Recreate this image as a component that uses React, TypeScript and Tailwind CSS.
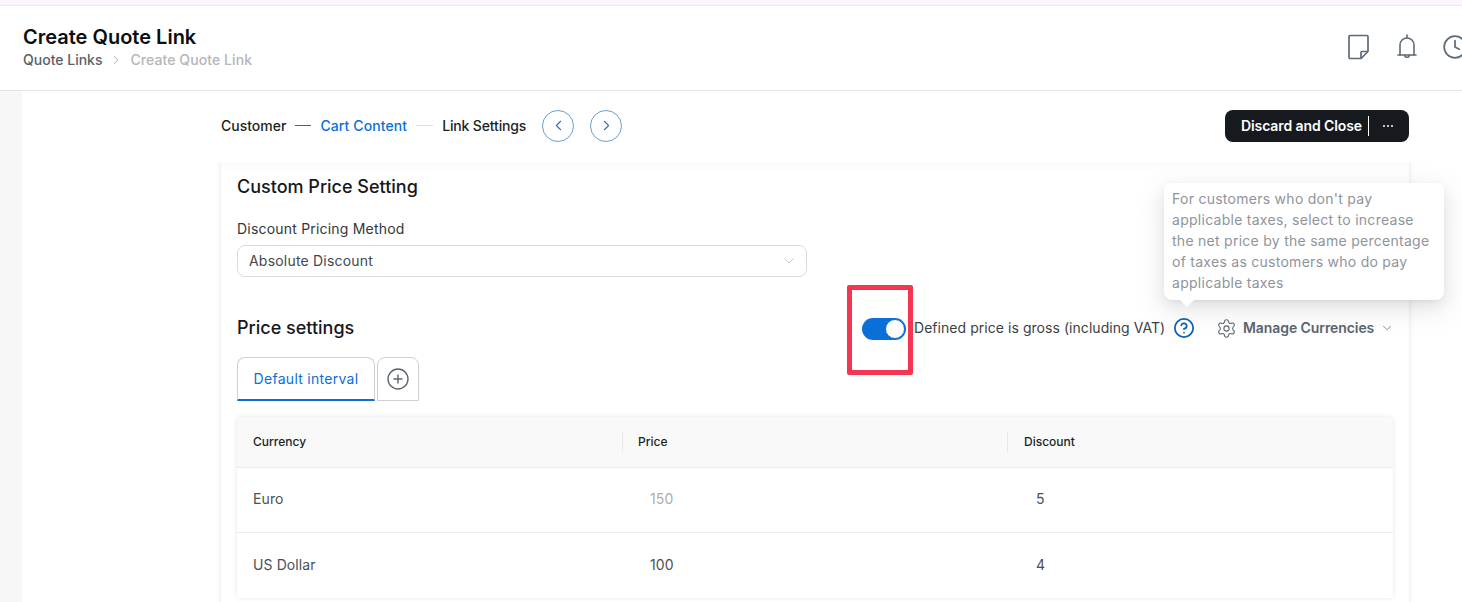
import React from "react";
import { ChevronDown, ChevronLeft, ChevronRight, Settings, Clock, CirclePlus, CircleHelp } from "lucide-react";

const rows = [
  { c: "Euro", p: "150", pc: "text-[#a9adb3]", d: "5" },
  { c: "US Dollar", p: "100", pc: "text-[#4b4f55]", d: "4" },
];

export default function App() {
  return (
    <div className="relative h-[602px] w-[1462px] overflow-hidden bg-white font-['Inter',sans-serif] text-[14px] text-[#1b1f24]">
      <div className="h-[6px] border-b border-[#eee3ee] bg-[#fdf5fd]" />
      <header className="flex h-[85px] items-center justify-between border-b border-[#e5e5e7] pl-[23px]">
        <div className="-mt-[3px] flex flex-col">
          <h1 className="text-[20px] font-semibold leading-[28px] text-[#0c0e10]">Create Quote Link</h1>
          <div className="-mt-[1px] flex items-center text-[14px] font-medium leading-[20px]">
            <span className="text-[#5b6067]">Quote Links</span>
            <ChevronRight className="mx-[7px] h-[16px] w-[14px] text-[#8d9197]" strokeWidth={1.25} />
            <span className="tracking-[0.08px] text-[#b4b6b9]">Create Quote Link</span>
          </div>
        </div>
        <div className="-mr-[6px] -mt-[2px] flex items-center text-[#5f6b78]">
          <svg width="23" height="26" viewBox="0 0 23 26" fill="none" stroke="currentColor" strokeWidth="1.7" strokeLinejoin="round">
            <path d="M3 1.5h17a1 1 0 0 1 1 1v15l-7 7H3a1 1 0 0 1-1-1v-21a1 1 0 0 1 1-1z" />
            <path d="M21 17.5h-6a1 1 0 0 0-1 1v6" />
          </svg>
          <svg className="ml-[25px]" width="24" height="26" viewBox="0 0 24 26" fill="none" stroke="currentColor" strokeWidth="1.6" strokeLinecap="round">
            <path d="M12 1v2.5" />
            <path d="M5 21V11a7 7 0 0 1 14 0v10" />
            <path d="M3 21h18" />
            <path d="M9.7 21a2.3 2.3 0 0 0 4.6 0" />
          </svg>
          <Clock className="ml-[23px] h-[26px] w-[26px]" strokeWidth={1.6} />
        </div>
      </header>
      <div className="flex h-[511px]">
        <div className="w-[22px] shrink-0 bg-[#f7f7f7]" />
        <main className="min-w-0 flex-1 pl-[199px] pr-[53px]">
          <div className="flex h-[69px] items-center justify-between">
            <div className="flex items-center text-[14px] font-medium">
              <span>Customer</span>
              <span className="mx-[9px] h-[1px] w-[16px] bg-[#0a6fe0]" />
              <span className="tracking-[0.1px] text-[#0b6fd8]">Cart Content</span>
              <span className="mx-[9px] h-[1px] w-[17px] bg-[#dedfe1]" />
              <span className="tracking-[-0.15px]">Link Settings</span>
              <button className="ml-[16px] flex h-[32px] w-[32px] items-center justify-center rounded-full border border-[#6d9fd6] text-[#3a6ea5]">
                <ChevronLeft className="h-[17px] w-[17px]" strokeWidth={1.5} />
              </button>
              <button className="ml-[16px] flex h-[32px] w-[32px] items-center justify-center rounded-full border border-[#6d9fd6] text-[#3a6ea5]">
                <ChevronRight className="h-[17px] w-[17px]" strokeWidth={1.5} />
              </button>
            </div>
            <div className="flex h-[32px] w-[184px] items-center rounded-[8px] bg-[#16191d] pl-[16px] text-[14px] font-semibold text-white">
              <span className="whitespace-nowrap tracking-[-0.1px]">Discard and Close</span>
              <span className="ml-[6px] h-[20px] w-[1px] bg-white" />
              <span className="ml-[14px] flex gap-[2px]">
                <i className="h-[2px] w-[2px] rounded-full bg-white" />
                <i className="h-[2px] w-[2px] rounded-full bg-white" />
                <i className="h-[2px] w-[2px] rounded-full bg-white" />
              </span>
            </div>
          </div>
          <div className="-mx-[8px] mt-[2px] h-[440px] overflow-hidden px-[8px]">
            <section className="-mt-[4px] h-[460px] bg-[linear-gradient(#fbfbfb,#ffffff_16px)] px-[16px] pt-[17px] shadow-[0_0_6px_rgba(0,0,0,0.1)]">
              <h2 className="text-[18px] font-medium leading-[24px] text-[#15181c]">Custom Price Setting</h2>
              <label className="mt-[20px] block leading-[20px] tracking-[0.2px] text-[#33373c]">Discount Pricing Method</label>
              <div className="mt-[6px] flex h-[32px] w-[570px] items-center justify-between rounded-[8px] border border-[#d9dadc] pl-[11px] pr-[9px] text-[#44484e]">
                <span className="-mt-[2px] tracking-[0.2px]">Absolute Discount</span>
                <ChevronDown className="h-[16px] w-[16px] text-[#b9bcc0]" strokeWidth={1.25} />
              </div>
              <div className="mt-[39px] flex h-[24px] items-center">
                <h2 className="-mt-[2px] w-[625px] shrink-0 text-[18px] font-medium text-[#15181c]">Price settings</h2>
                <div className="mt-[1px] flex h-[22px] w-[44px] shrink-0 items-center justify-end rounded-full bg-[#0b6fd8] pr-[1px]">
                  <span className="h-[20px] w-[20px] rounded-full border-[1px] border-[#0b6fd8] bg-white" />
                </div>
                <span className="-mt-[1px] ml-[8px] w-[259px] shrink-0 whitespace-nowrap tracking-[0.05px] text-[#3b3f44]">Defined price is gross (including VAT)</span>
                <CircleHelp className="h-[22px] w-[22px] shrink-0 text-[#0b60b8]" strokeWidth={1.9} />
                <Settings className="ml-[21px] h-[21px] w-[21px] shrink-0 text-[#5b6570]" strokeWidth={1.2} />
                <span className="-mt-[1px] ml-[6px] whitespace-nowrap text-[14px] font-semibold tracking-[-0.08px] text-[#5b6570]">Manage Currencies</span>
                <ChevronDown className="-mr-[6px] ml-[6px] h-[14px] w-[14px] shrink-0 text-[#5b6570]" strokeWidth={1.25} />
              </div>
              <div className="mt-[17px] flex items-stretch gap-[2px]">
                <div className="flex h-[44px] w-[138px] items-center justify-center rounded-t-[8px] border border-b-2 border-[#cfd0d3] border-b-[#0b6fd8] tracking-[0.28px] text-[#0b6fd8]">Default interval</div>
                <div className="flex h-[44px] w-[42px] items-center justify-center rounded-t-[8px] border border-[#cfd0d3] text-[#5b6570]">
                  <CirclePlus className="h-[24px] w-[24px]" strokeWidth={1.4} />
                </div>
              </div>
              <div className="mt-[16px] rounded-[2px] shadow-[0_0_5px_rgba(0,0,0,0.1)]">
                <div className="grid h-[51px] grid-cols-[385px_385px_1fr] items-center border-b border-[#ececee] bg-[#f9f9fa] text-[12px] font-medium text-[#1b1f24]">
                  <div className="pl-[16px]">Currency</div>
                  <div className="border-l border-[#e8e8ea] pl-[15px] leading-[20px]">Price</div>
                  <div className="border-l border-[#e8e8ea] pl-[16px] leading-[20px]">Discount</div>
                </div>
                {rows.map((r, i) => (
                  <div key={r.c} className={`grid h-[65px] grid-cols-[385px_385px_1fr] items-center tracking-[0.1px] text-[#4b4f55] ${i === 0 ? "border-b border-[#ececee]" : ""}`}>
                    <div className="-mt-[3px] pl-[16px]">{r.c}</div>
                    <div className={`-mt-[3px] pl-[28px] ${r.pc}`}>{r.p}</div>
                    <div className="-mt-[3px] pl-[29px]">{r.d}</div>
                  </div>
                ))}
              </div>
            </section>
          </div>
        </main>
      </div>

      <div className="absolute left-[1164px] top-[183px] h-[117px] w-[280px] rounded-[8px] bg-white py-[5px] pl-[8px] pr-[8px] leading-[21px] tracking-[0.27px] text-[#8f949b] shadow-[0_6px_16px_rgba(0,0,0,0.08),0_3px_6px_-4px_rgba(0,0,0,0.12),0_9px_28px_8px_rgba(0,0,0,0.05)]">
        For customers who don't pay applicable taxes, select to increase the net price by the same percentage of taxes as customers who do pay applicable taxes
        <span className="absolute left-[18px] top-[112px] h-[10px] w-[10px] rotate-45 bg-white" />
      </div>
      <div className="absolute left-[847px] top-[285px] h-[90px] w-[66px] rounded-[2px] border-[5px] border-[#f43652]" />
    </div>
  );
}
